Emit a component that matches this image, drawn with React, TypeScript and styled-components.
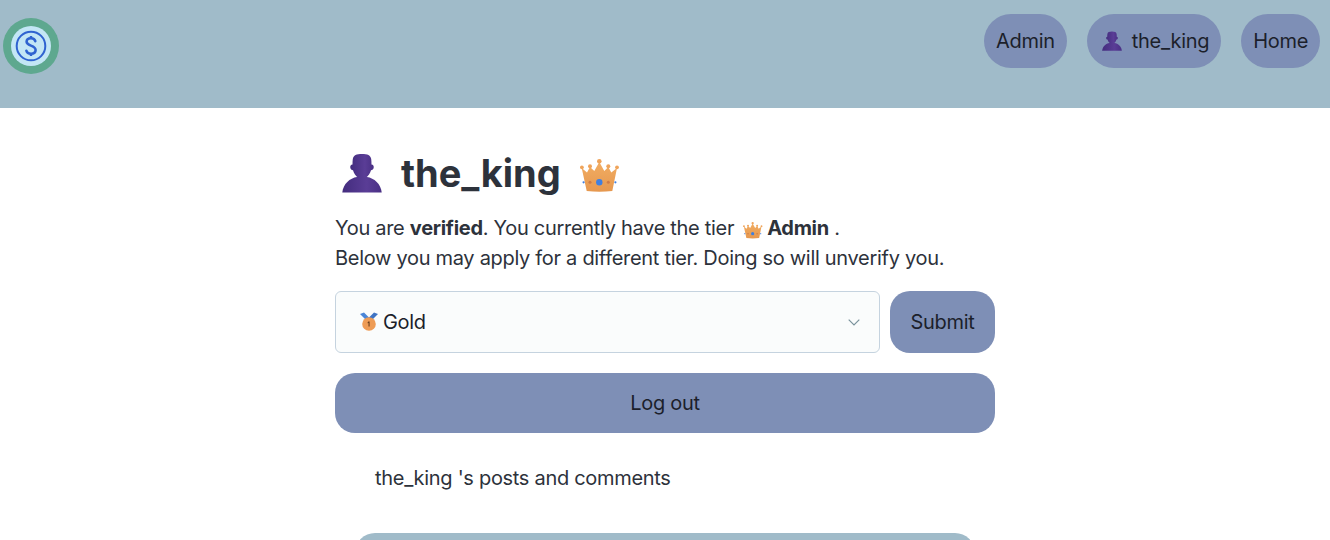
import React from "react";
import styled, { createGlobalStyle } from "styled-components";

const Global = createGlobalStyle`
  html, body { margin: 0; padding: 0; background: #fff; height: 540px; overflow: hidden; }
  body { font-family: Inter, "Liberation Sans", sans-serif; color: #2d323b; font-size: 20px; letter-spacing: -0.3px; }
`;
const Header = styled.header`
  height: 108px; background: #a0bbc9; display: flex; justify-content: space-between;
  align-items: flex-start; padding: 14px 10px 0 3px; box-sizing: border-box;
`;
const Logo = styled.div`
  width: 56px; height: 56px; margin-top: 4px; border-radius: 50%; background: #5ea88f;
  display: flex; align-items: center; justify-content: center;
`;
const Nav = styled.nav`display: flex; gap: 20px;`;
const NavItem = styled.a`
  height: 54px; padding: 0 12px; border-radius: 27px; background: #7e8fb6; color: #1c1f2b;
  display: flex; align-items: center; font-size: 20px; line-height: 1;
`;
const NavIcon = styled.span`display: flex; margin: 0 10px 0 3px;`;
const Main = styled.main`width: 660px; margin: 0 auto; display: flex; flex-direction: column;`;
const Title = styled.h1`
  margin: 40px 0 0; height: 50px; display: flex; align-items: center; padding-left: 7px;
  font-size: 38px; font-weight: 700; color: #2d323b; line-height: 50px; letter-spacing: 0;
`;
const TitleName = styled.span`margin: 0 19px;`;
const TitleCrown = styled.span`display: flex; margin-top: 6px;`;
const Para = styled.p`margin: 15px 0 0; font-size: 20px; line-height: 30px; white-space: nowrap;`;
const InlineCrown = styled.span`display: inline-flex; vertical-align: -4px; margin: 0 4px 0 9px;`;
const FormRow = styled.div`display: flex; gap: 10px; margin-top: 18px; height: 62px;`;
const Select = styled.div`
  flex: 1; box-sizing: border-box; border: 1px solid #c5d3df; border-radius: 6px; background: #fafcfc;
  display: flex; align-items: center; padding: 0 19px 0 24px; color: #1c1f2b; gap: 5px;
`;
const SelectText = styled.span`flex: 1;`;
const Submit = styled.button`
  width: 105px; border: 0; border-radius: 20px; background: #7e8fb6; color: #1c1f2b;
  font: 20px Inter, sans-serif; letter-spacing: -0.3px; padding: 0;
`;
const Logout = styled.button`
  margin-top: 20px; height: 60px; border: 0; border-radius: 20px; background: #7e8fb6; color: #1c1f2b;
  font: 20px Inter, sans-serif; letter-spacing: -0.3px; padding: 0;
`;
const Posts = styled.p`margin: 30px 0 0 40px; line-height: 30px; font-size: 20px;`;
const Card = styled.div`margin: 40px 20px 0; height: 80px; border-radius: 20px; background: #a0bbc9;`;

const Person = ({ size, id }: { size: number; id: string }) => (
  <svg width={size} height={size} viewBox="0 0 40 40">
    <defs>
      <linearGradient id={id} x1="0" x2="1" y1="0" y2="0">
        <stop offset="0" stopColor="#432c7e" /><stop offset="0.62" stopColor="#5a3d96" /><stop offset="1" stopColor="#4a3085" />
      </linearGradient>
    </defs>
    <path fill={`url(#${id})`} d="M.3 39.500C1 31 8 25 15 24h10c7 1 14 7 14.700 15.500z" />
    <path fill={`url(#${id})`} d="M20 1c5.500 0 8.700 1.300 9.200 5 .2 1.500.3 3.500.3 5.500 1.700.2 2.500 1.500 2.200 3.200-.3 1.500-1.300 2.500-2.700 2.500-.9 3-2.700 6-5 7.300h-8c-2.300-1.300-4.100-4.300-5-7.300-1.400 0-2.400-1-2.700-2.500-.3-1.700.5-3 2.200-3.200 0-2 .1-4 .3-5.500C11.300 2.300 14.500 1 20 1z" />
  </svg>
);

const Crown = ({ size, id }: { size: number; id: string }) => (
  <svg width={size} height={size * 0.85} viewBox="0 0 40 34">
    <defs>
      <linearGradient id={id} x1="0" x2="0" y1="0" y2="1">
        <stop offset="0" stopColor="#f2ad62" /><stop offset="1" stopColor="#e6984f" />
      </linearGradient>
    </defs>
    <path fill={`url(#${id})`} d="M6.700 32 1.700 9 7 13.500 10 8l4.300 4L19.300 3l5 9 4-4 3 5.500L37 9l-4.700 23q-12.800 1.500-25.600 0z" />
    <circle cx="19.300" cy="2.300" r="2.300" fill="#efa45b" />
    <circle cx="10" cy="7.300" r="2" fill="#efa45b" />
    <circle cx="28.300" cy="7.300" r="2" fill="#efa45b" />
    <circle cx="1.900" cy="8.300" r="1.900" fill="#efa45b" />
    <circle cx="37" cy="8.300" r="1.900" fill="#efa45b" />
    <circle cx="19.300" cy="23.300" r="3.200" fill="#3f7fe0" />
    <circle cx="10" cy="23.300" r="1.500" fill="#cf7b46" />
    <circle cx="28.300" cy="23.300" r="1.500" fill="#cf7b46" />
    <circle cx="3.600" cy="23.300" r="1.100" fill="#3f7fe0" />
    <circle cx="35.400" cy="23.300" r="1.100" fill="#3f7fe0" />
  </svg>
);

const Medal = () => (
  <svg width="18" height="21" viewBox="0 0 18 21">
    <path fill="#4a86d8" d="M0 2 4 .5l5.500 5.500v3H7z" />
    <path fill="#3f74c4" d="M18 2 14 .5 8.500 6v3H11z" />
    <circle cx="9" cy="12" r="6.800" fill="#ee9c56" />
    <path fill="#6b3f1e" d="M8.300 9.600h1.300v5H8.500V11l-.9.300v-.9z" />
  </svg>
);

export default function App() {
  return (
    <>
      <Global />
      <Header>
        <Logo>
          <svg width="40" height="40" viewBox="0 0 40 40">
            <circle cx="20" cy="20" r="20" fill="#c3e6f5" />
            <circle cx="20" cy="20" r="14.300" fill="none" stroke="#2f63d0" strokeWidth="2" />
            <path fill="none" stroke="#2f63d0" strokeWidth="2.600" strokeLinecap="round" d="M24.300 15.200C23.800 13.300 22.200 12.300 20 12.300c-2.600 0-4.400 1.400-4.400 3.500 0 4.600 9 3 9 8.200 0 2.300-2 3.700-4.600 3.700-2.400 0-4.100-1-4.600-3" />
            <path stroke="#2f63d0" strokeWidth="2.400" d="M20 10v2M20 28v2" />
          </svg>
        </Logo>
        <Nav>
          <NavItem>Admin</NavItem>
          <NavItem><NavIcon><Person size={20} id="p1" /></NavIcon>the_king</NavItem>
          <NavItem>Home</NavItem>
        </Nav>
      </Header>
      <Main>
        <Title>
          <Person size={40} id="p2" />
          <TitleName>the_king</TitleName>
          <TitleCrown><Crown size={40} id="c1" /></TitleCrown>
        </Title>
        <Para>
          You are <b>verified</b>. You currently have the tier
          <InlineCrown><Crown size={20} id="c2" /></InlineCrown>
          <b>Admin</b> .<br />
          Below you may apply for a different tier. Doing so will unverify you.
        </Para>
        <FormRow>
          <Select>
            <Medal />
            <SelectText>Gold</SelectText>
            <svg width="12" height="7" viewBox="0 0 12 7"><path d="M.7.7 6 6 11.300.7" fill="none" stroke="#7a929c" strokeWidth="1.200" /></svg>
          </Select>
          <Submit>Submit</Submit>
        </FormRow>
        <Logout>Log out</Logout>
        <Posts>the_king 's posts and comments</Posts>
        <Card />
      </Main>
    </>
  );
}
